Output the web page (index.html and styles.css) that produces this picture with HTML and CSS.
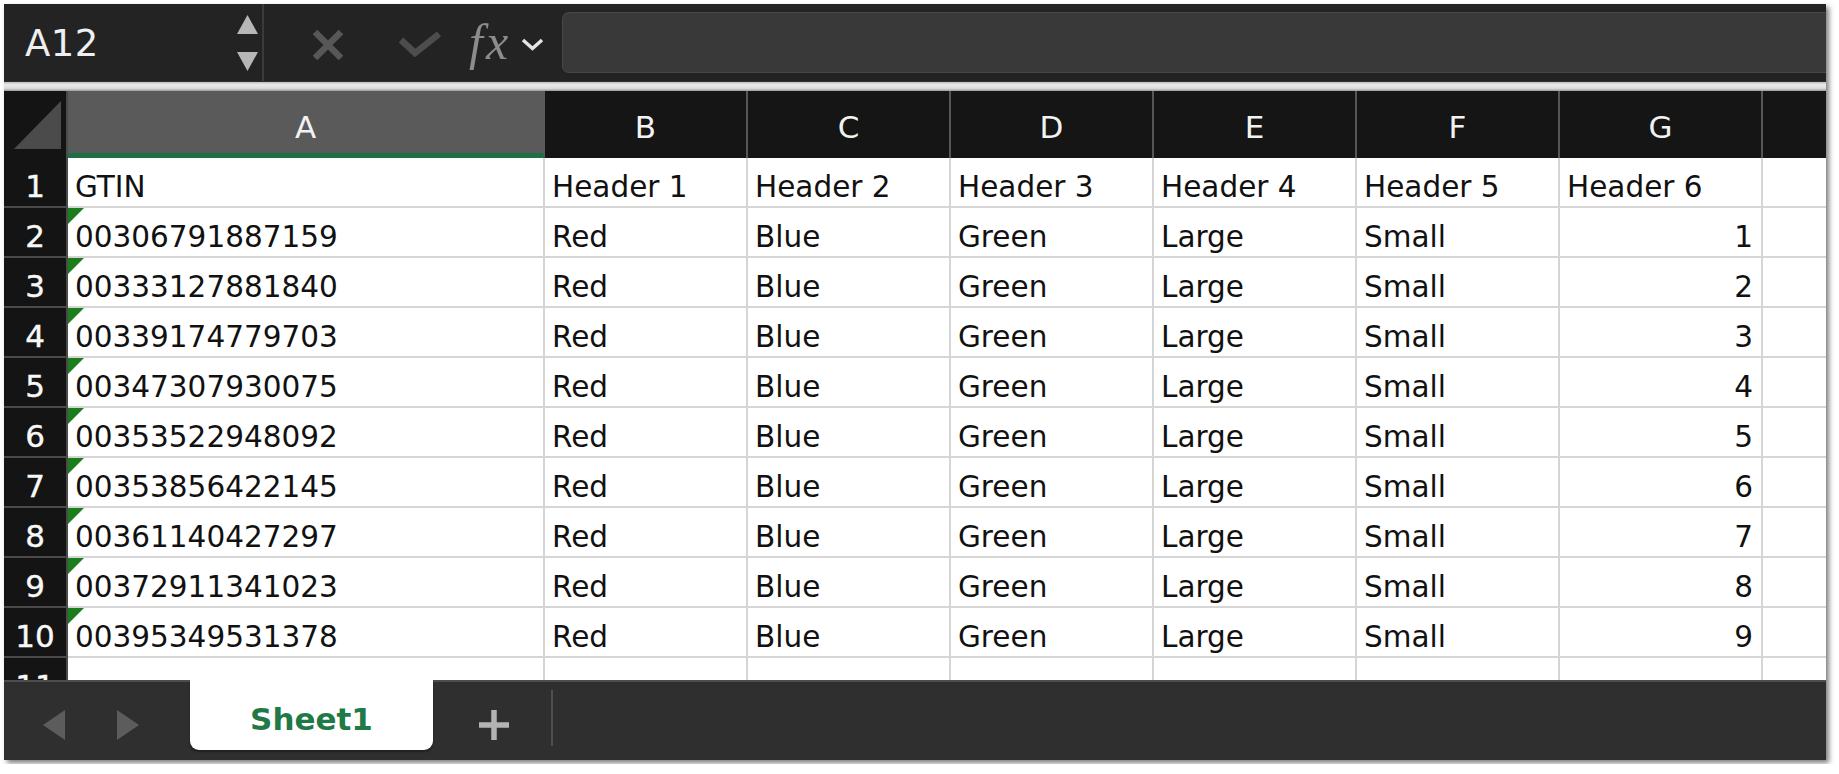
FILE: index.html
```html
<!DOCTYPE html>
<html>
<head>
<meta charset="utf-8">
<link rel="stylesheet" href="styles.css">
</head>
<body>
<div class="app">
  <div class="topbar">
    <div class="namebox">
      <span class="ref">A12</span>
      <div class="spin">
        <svg width="21" height="19" viewBox="0 0 21 19"><polygon points="10.5,0 21,19 0,19" fill="#b7b7b7"/></svg>
        <svg width="21" height="19" viewBox="0 0 21 19"><polygon points="0,0 21,0 10.5,19" fill="#b7b7b7"/></svg>
      </div>
    </div>
    <div class="fbtns">
      <svg class="ico-x" width="32" height="32" viewBox="0 0 32 32"><path d="M3 3 L29 29 M29 3 L3 29" stroke="#575757" stroke-width="6.5" fill="none"/></svg>
      <svg class="ico-check" width="44" height="26" viewBox="0 0 44 26"><polyline points="3,9 17,22 41,3" stroke="#4d4d4d" stroke-width="6.5" fill="none"/></svg>
      <span class="fx">fx</span>
      <svg class="ico-chev" width="23" height="13" viewBox="0 0 23 13"><polyline points="2,2 11.5,10.5 21,2" stroke="#e4e4e4" stroke-width="3.5" fill="none"/></svg>
    </div>
    <div class="finput"></div>
  </div>
  <div class="strip"></div>
  <div class="sheet">
    <div class="grid">
      <div class="corner"><svg width="62" height="67" viewBox="0 0 62 67"><polygon points="57,10 57,58 10,58" fill="#4b4b4b"/></svg></div>
      <div class="ch sel">A</div>
      <div class="ch">B</div>
      <div class="ch">C</div>
      <div class="ch">D</div>
      <div class="ch">E</div>
      <div class="ch">F</div>
      <div class="ch">G</div>
      <div class="ch last"></div>

      <div class="rh">1</div>
      <div class="c">GTIN</div>
      <div class="c">Header 1</div>
      <div class="c">Header 2</div>
      <div class="c">Header 3</div>
      <div class="c">Header 4</div>
      <div class="c">Header 5</div>
      <div class="c">Header 6</div>
      <div class="c last"></div>

      <div class="rh">2</div>
      <div class="c num"><i class="err"></i>00306791887159</div>
      <div class="c">Red</div><div class="c">Blue</div><div class="c">Green</div><div class="c">Large</div><div class="c">Small</div>
      <div class="c r">1</div><div class="c last"></div>

      <div class="rh">3</div>
      <div class="c num"><i class="err"></i>00333127881840</div>
      <div class="c">Red</div><div class="c">Blue</div><div class="c">Green</div><div class="c">Large</div><div class="c">Small</div>
      <div class="c r">2</div><div class="c last"></div>

      <div class="rh">4</div>
      <div class="c num"><i class="err"></i>00339174779703</div>
      <div class="c">Red</div><div class="c">Blue</div><div class="c">Green</div><div class="c">Large</div><div class="c">Small</div>
      <div class="c r">3</div><div class="c last"></div>

      <div class="rh">5</div>
      <div class="c num"><i class="err"></i>00347307930075</div>
      <div class="c">Red</div><div class="c">Blue</div><div class="c">Green</div><div class="c">Large</div><div class="c">Small</div>
      <div class="c r">4</div><div class="c last"></div>

      <div class="rh">6</div>
      <div class="c num"><i class="err"></i>00353522948092</div>
      <div class="c">Red</div><div class="c">Blue</div><div class="c">Green</div><div class="c">Large</div><div class="c">Small</div>
      <div class="c r">5</div><div class="c last"></div>

      <div class="rh">7</div>
      <div class="c num"><i class="err"></i>00353856422145</div>
      <div class="c">Red</div><div class="c">Blue</div><div class="c">Green</div><div class="c">Large</div><div class="c">Small</div>
      <div class="c r">6</div><div class="c last"></div>

      <div class="rh">8</div>
      <div class="c num"><i class="err"></i>00361140427297</div>
      <div class="c">Red</div><div class="c">Blue</div><div class="c">Green</div><div class="c">Large</div><div class="c">Small</div>
      <div class="c r">7</div><div class="c last"></div>

      <div class="rh">9</div>
      <div class="c num"><i class="err"></i>00372911341023</div>
      <div class="c">Red</div><div class="c">Blue</div><div class="c">Green</div><div class="c">Large</div><div class="c">Small</div>
      <div class="c r">8</div><div class="c last"></div>

      <div class="rh">10</div>
      <div class="c num"><i class="err"></i>00395349531378</div>
      <div class="c">Red</div><div class="c">Blue</div><div class="c">Green</div><div class="c">Large</div><div class="c">Small</div>
      <div class="c r">9</div><div class="c last"></div>

      <div class="rh">11</div>
      <div class="c"></div><div class="c"></div><div class="c"></div><div class="c"></div><div class="c"></div><div class="c"></div><div class="c"></div><div class="c last"></div>
    </div>
  </div>
  <div class="tabbar">
    <div class="nav">
      <svg width="22" height="30" viewBox="0 0 22 30"><polygon points="22,0 22,30 0,15" fill="#5c5c5c"/></svg>
      <svg width="22" height="30" viewBox="0 0 22 30"><polygon points="0,0 22,15 0,30" fill="#5c5c5c"/></svg>
    </div>
    <div class="tab">Sheet1</div>
    <svg class="plus" width="34" height="34" viewBox="0 0 34 34"><path d="M17 2 V32 M2 17 H32" stroke="#b3b3b3" stroke-width="5.5" fill="none"/></svg>
    <div class="divider"></div>
  </div>
</div>
</body>
</html>
```

FILE: styles.css
```css
* { box-sizing: border-box; }

html, body {
  margin: 0;
  padding: 0;
  background: #ffffff;
}

body {
  padding: 4px;
  font-family: "DejaVu Sans", "Liberation Sans", sans-serif;
}

.app {
  width: 1822px;
  height: 756px;
  display: flex;
  flex-direction: column;
  background: #232323;
  box-shadow: 3px 3px 5px rgba(0, 0, 0, 0.5);
  overflow: hidden;
}

/* ---------- formula bar ---------- */
.topbar {
  height: 78px;
  flex: none;
  display: flex;
  align-items: stretch;
  background: #232323;
  border-bottom: 1px solid #2c2c2c;
}

.namebox {
  width: 260px;
  flex: none;
  display: flex;
  align-items: center;
  justify-content: space-between;
  padding: 0 4px 0 21px;
  border-right: 2px solid #3a3a3a;
}

.ref {
  color: #efefef;
  font-size: 37px;
  letter-spacing: 0.5px;
  padding-top: 2px;
}

.spin {
  display: flex;
  flex-direction: column;
  justify-content: space-between;
  height: 57px;
  padding-top: 1px;
}

.spin svg { display: block; }

.fbtns {
  flex: none;
  width: 298px;
  display: flex;
  align-items: center;
  padding-left: 48px;
}

.ico-x { display: block; margin-top: 4px; }
.ico-check { display: block; margin-left: 54px; margin-top: 2px; }

.fx {
  font-family: "Liberation Serif", "DejaVu Serif", serif;
  font-style: italic;
  font-size: 50px;
  color: #8c8c8c;
  margin-left: 27px;
  letter-spacing: 3px;
  line-height: 1;
  padding-bottom: 2px;
}

.ico-chev { display: block; margin-left: 10px; margin-top: 4px; }

.finput {
  flex: 1;
  margin: 8px 0 8px 0;
  background: #393939;
  border: 1px solid #474747;
  border-right: none;
  border-radius: 7px 0 0 7px;
}

.strip {
  height: 9px;
  flex: none;
  background: linear-gradient(#bdbdbd, #e9e9e9 30%, #dcdcdc 70%, #9a9a9a);
}

/* ---------- grid ---------- */
.sheet {
  flex: 1;
  overflow: hidden;
  background: #ffffff;
}

.grid {
  display: grid;
  grid-template-columns: 64px 477px repeat(6, 203px) 1fr;
  grid-template-rows: 67px repeat(11, 50px);
}

.corner {
  background: #141414;
  border-right: 2px solid #4a4a4a;
}

.corner svg { display: block; }

.ch {
  background: #151515;
  color: #f2f2f2;
  font-size: 31px;
  display: flex;
  align-items: center;
  justify-content: center;
  border-right: 2px solid #565656;
  padding-top: 4px;
}

.ch.sel {
  background: #5a5a5a;
  border-bottom: 5px solid #1e6f43;
  border-right-color: #5a5a5a;
  padding-top: 9px;
}

.ch.last { border-right: none; }

.rh {
  background: #141414;
  color: #f8f8f8;
  font-size: 31px;
  display: flex;
  align-items: center;
  justify-content: center;
  border-bottom: 2px solid #4a4a4a;
  border-right: 2px solid #4a4a4a;
  padding-top: 7px;
  -webkit-text-stroke: 0.4px #f8f8f8;
}

.c {
  position: relative;
  color: #111111;
  font-size: 29.5px;
  display: flex;
  align-items: center;
  padding: 9px 0 0 7px;
  border-right: 2px solid #d5d5d5;
  border-bottom: 2px solid #d5d5d5;
  white-space: nowrap;
}

.c.r {
  justify-content: flex-end;
  padding: 9px 8px 0 0;
}

.c.last { border-right: none; }

.err {
  position: absolute;
  left: 0;
  top: 0;
  width: 0;
  height: 0;
  border-top: 16px solid #1c7d1c;
  border-right: 16px solid transparent;
}

/* ---------- sheet tabs ---------- */
.tabbar {
  height: 80px;
  flex: none;
  display: flex;
  align-items: flex-start;
  background: #2f2f2f;
  border-top: 2px solid #4d4d4d;
}

.nav {
  display: flex;
  gap: 52px;
  margin: 28px 0 0 39px;
}

.nav svg { display: block; }

.tab {
  margin: -2px 0 0 51px;
  width: 243px;
  height: 70px;
  background: #ffffff;
  border-radius: 0 0 9px 9px;
  color: #1f7a48;
  font-weight: bold;
  font-size: 31px;
  display: flex;
  align-items: center;
  justify-content: center;
  padding-top: 8px;
  box-shadow: 0 2px 2px rgba(0, 0, 0, 0.35);
}

.plus {
  display: block;
  margin: 26px 0 0 44px;
}

.divider {
  width: 2px;
  height: 56px;
  background: #4f4f4f;
  margin: 8px 0 0 40px;
}
```
